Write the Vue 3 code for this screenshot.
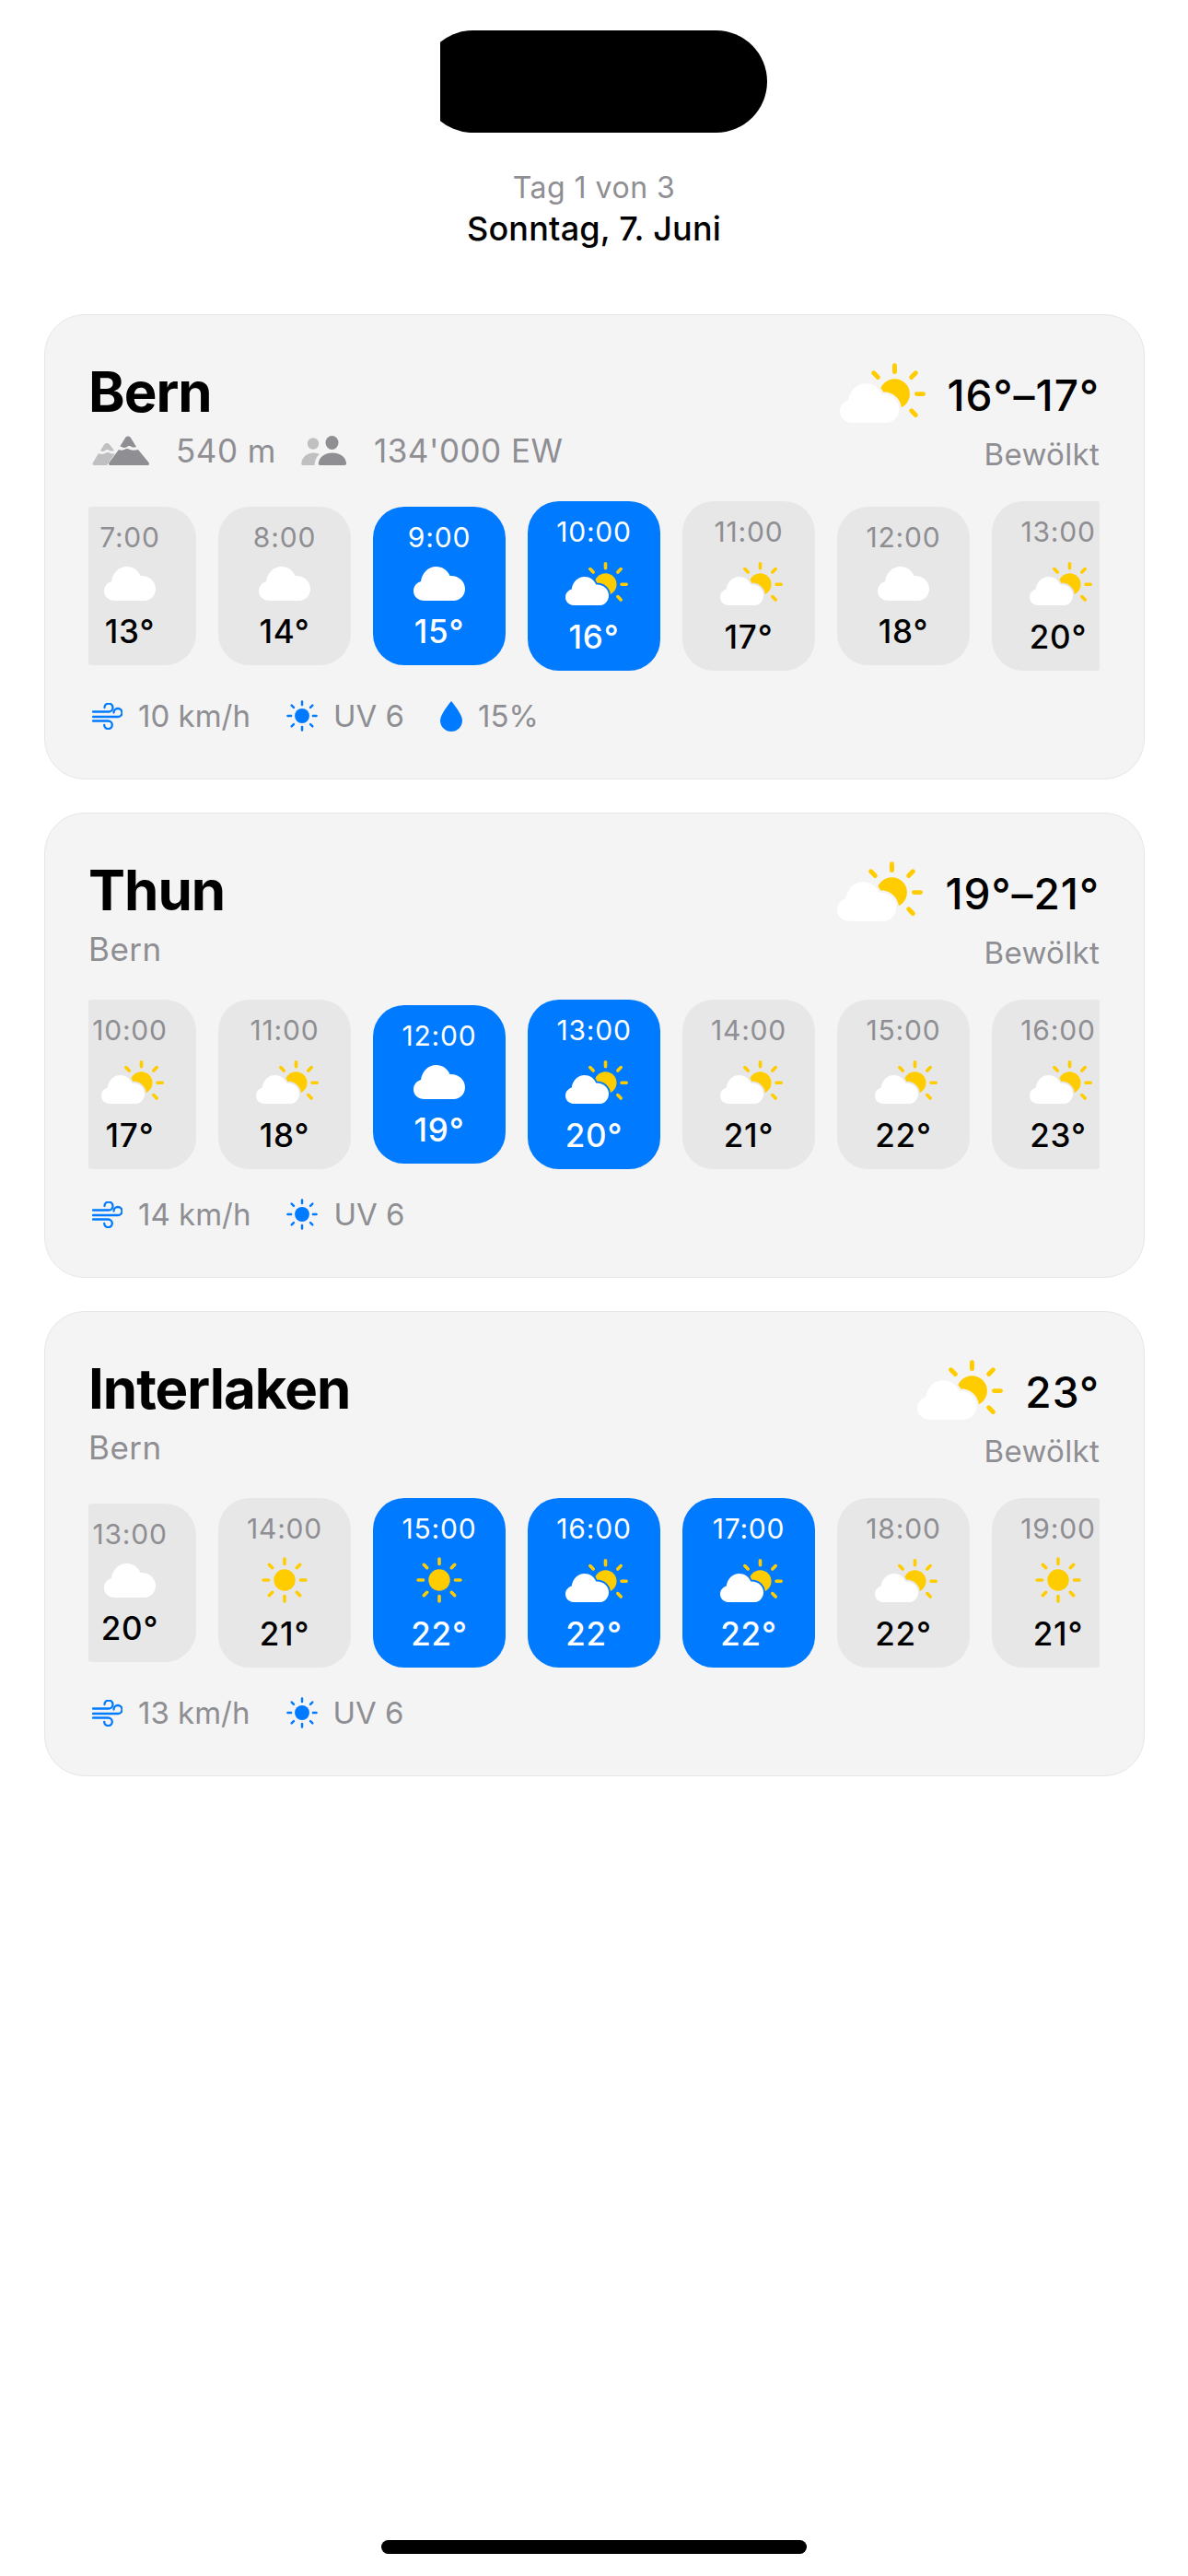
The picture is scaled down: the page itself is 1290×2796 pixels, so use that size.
<script setup>
const cities = [
  {
    name: 'Bern',
    range: '16°–17°',
    height: '540 m',
    people: "134'000 EW",
    wind: '10 km/h',
    rain: '15%',
    hours: [
      { time: '7:00', temp: 13, icon: 'cloud' },
      { time: '8:00', temp: 14, icon: 'cloud' },
      { time: '9:00', temp: 15, icon: 'cloud', active: true },
      { time: '10:00', temp: 16, icon: 'mixed', active: true },
      { time: '11:00', temp: 17, icon: 'mixed' },
      { time: '12:00', temp: 18, icon: 'cloud' },
      { time: '13:00', temp: 20, icon: 'mixed' },
    ],
  },
  {
    name: 'Thun',
    canton: 'Bern',
    range: '19°–21°',
    wind: '14 km/h',
    hours: [
      { time: '10:00', temp: 17, icon: 'mixed' },
      { time: '11:00', temp: 18, icon: 'mixed' },
      { time: '12:00', temp: 19, icon: 'cloud', active: true },
      { time: '13:00', temp: 20, icon: 'mixed', active: true },
      { time: '14:00', temp: 21, icon: 'mixed' },
      { time: '15:00', temp: 22, icon: 'mixed' },
      { time: '16:00', temp: 23, icon: 'mixed' },
    ],
  },
  {
    name: 'Interlaken',
    canton: 'Bern',
    range: '23°',
    wind: '13 km/h',
    hours: [
      { time: '13:00', temp: 20, icon: 'cloud' },
      { time: '14:00', temp: 21, icon: 'sun' },
      { time: '15:00', temp: 22, icon: 'sun', active: true },
      { time: '16:00', temp: 22, icon: 'mixed', active: true },
      { time: '17:00', temp: 22, icon: 'mixed', active: true },
      { time: '18:00', temp: 22, icon: 'mixed' },
      { time: '19:00', temp: 21, icon: 'sun' },
    ],
  },
]
</script>

<template>
  <div class="page">
    <svg class="sprites" aria-hidden="true">
      <defs>
        <path id="cloud-shape" d="M12 37C5 37 0 32.5 0 26.5C0 21 3.5 17.5 8 16C9.5 6.5 16 0 24.5 0C31.5 0 37 4 39.5 10C49 9.5 56 16 56 24C56 31.5 50.5 37 43.5 37Z" />
        <symbol id="i-cloud" viewBox="0 0 56 37">
          <use href="#cloud-shape" fill="#fff" />
        </symbol>
        <symbol id="i-sun" viewBox="-25 -25 50 50">
          <circle r="11.7" fill="currentColor" />
          <g stroke="currentColor" stroke-width="3.6" stroke-linecap="round">
            <path d="M0 -17.5V-22.9M0 17.5V22.9M-17.5 0H-22.9M17.5 0H22.9" />
            <path d="M13.3 -13.3L16.7 -16.7M-13.3 -13.3L-16.7 -16.7M13.3 13.3L16.7 16.7M-13.3 13.3L-16.7 16.7" />
          </g>
        </symbol>
        <symbol id="i-mixed" viewBox="0 0 68 47">
          <g transform="translate(43.5 24.3)">
            <circle r="12" fill="#ffcc00" />
            <g stroke="#ffcc00" stroke-width="3.6" stroke-linecap="round">
              <path d="M0 -17.5V-22.5M17.5 0H22.7" />
              <path d="M13.3 -13.3L16.7 -16.7M-13.3 -13.3L-16.7 -16.7M13.3 13.3L16.7 16.7" />
            </g>
          </g>
          <g transform="translate(0 16) scale(.84)">
            <use href="#cloud-shape" fill="#fff" stroke="currentColor" stroke-width="4.4" paint-order="stroke" />
          </g>
        </symbol>
      </defs>
    </svg>

    <header class="top">
      <div class="redacted"><div class="redacted-fill"></div></div>
      <div class="day-count">Tag 1 von 3</div>
      <div class="day-name">Sonntag, 7. Juni</div>
    </header>

    <main class="cards">
      <section v-for="city in cities" :key="city.name" class="card">
        <div class="head">
          <div class="head-left">
            <h2 class="name">{{ city.name }}</h2>
            <div class="sub">
              <template v-if="city.height">
                <svg class="ic-mountain" viewBox="0 0 62 32">
                  <g fill="#c0c0c2">
                    <path d="M13.5 9Q16 7 18.5 9L24 16Q21 17 19 16Q16 14 14 16Q12 18 9 16Z" />
                    <path d="M7 19Q11 21 14 19Q17 17 20 19Q22 20 25 19L16 32H2.5Q-.5 32 1 29Z" />
                  </g>
                  <g fill="#8e8e93">
                    <path d="M36.5 1.500Q39 -.5 41.500 1.500L48 12Q45 13 43 12Q40 10 38 12Q35 14 32 12Q30 11 30 12Z" />
                    <path d="M29 15Q32 16.500 35 15Q38 13 41 15Q45 16.500 50 15L61.500 29Q63 32 60 32H20Q17 32 18.500 29Z" />
                  </g>
                </svg>
                <span class="sub-height">{{ city.height }}</span>
                <svg class="ic-people" viewBox="0 0 49 32">
                  <circle cx="13" cy="8.500" r="6.200" fill="#c0c0c2" />
                  <path fill="#c0c0c2" d="M2 32Q0 32 .2 30C1 23 6 19 13 18.500C15.500 18.500 18 19 20 20C17 22.500 15 26 14.500 32Z" />
                  <ellipse cx="33.500" cy="7.500" rx="7" ry="7.500" fill="#8e8e93" />
                  <path fill="#8e8e93" d="M20.500 32Q18.500 32 18.800 29.500C20 22.500 26 18.500 34 18.500C42 18.500 48 22.500 49 29.500C49.200 32 47.500 32 46 32Z" />
                </svg>
                <span>{{ city.people }}</span>
              </template>
              <span v-else>{{ city.canton }}</span>
            </div>
          </div>
          <div class="head-right">
            <div class="summary">
              <svg class="ic-summary"><use href="#i-mixed" /></svg>
              <span class="range">{{ city.range }}</span>
            </div>
            <div class="condition">Bewölkt</div>
          </div>
        </div>

        <div class="hours">
          <div class="track">
            <div
              v-for="hour in city.hours"
              :key="hour.time"
              class="hour"
              :class="{ active: hour.active }"
            >
              <span class="time">{{ hour.time }}</span>
              <div class="hour-icon" :class="{ short: hour.icon === 'cloud' }">
                <svg v-if="hour.icon === 'cloud'" class="ic-cloud"><use href="#i-cloud" /></svg>
                <svg v-else-if="hour.icon === 'sun'" class="ic-sun"><use href="#i-sun" /></svg>
                <svg v-else class="ic-mixed"><use href="#i-mixed" /></svg>
              </div>
              <span class="temp">{{ hour.temp }}°</span>
            </div>
          </div>
        </div>

        <div class="facts">
          <div class="fact">
            <svg class="ic-wind" viewBox="0 0 33 29" fill="none" stroke="#007aff" stroke-width="2.300" stroke-linecap="round">
              <path d="M1 9.500H18A4.500 4.500 0 1 0 13.500 5" />
              <path d="M1 15H28A4.500 4.500 0 1 0 23.500 10.500" />
              <path d="M1 19.500H17.500A4.300 4.300 0 1 1 13.200 23.800" />
            </svg>
            <span>{{ city.wind }}</span>
          </div>
          <div class="fact">
            <svg class="ic-uv"><use href="#i-sun" /></svg>
            <span>UV 6</span>
          </div>
          <div v-if="city.rain" class="fact">
            <svg class="ic-drop" viewBox="0 0 24 33">
              <path fill="#007aff" d="M12 0C12 0 24 14 24 21A12 12 0 0 1 0 21C0 14 12 0 12 0Z" />
            </svg>
            <span>{{ city.rain }}</span>
          </div>
        </div>
      </section>
    </main>

    <div class="home-bar"></div>
  </div>
</template>

<style scoped>
.page {
  position: relative;
  width: 1290px;
  height: 2796px;
  padding-top: 33px;
  box-sizing: border-box;
  background: #fff;
  color: #000;
  font-family: Inter, "Noto Sans", sans-serif;
  overflow: hidden;
}
.sprites { position: absolute; width: 0; height: 0; }

.top { display: flex; flex-direction: column; align-items: center; }
.redacted {
  align-self: flex-start;
  margin-left: 478px;
  width: 355px;
  height: 111px;
  overflow: hidden;
}
.redacted-fill {
  width: 375px;
  height: 111px;
  margin-left: -20px;
  border-radius: 55.5px;
  background: #000;
}
.day-count {
  margin-top: 38px;
  font-size: 32px;
  line-height: 44px;
  letter-spacing: .5px;
  color: #8e8e93;
}
.day-name {
  font-size: 36px;
  line-height: 44px;
  letter-spacing: .2px;
  font-weight: 500;
}

.cards {
  display: flex;
  flex-direction: column;
  gap: 36px;
  margin: 71px 47px 0 48px;
}
.card {
  height: 505px;
  box-sizing: border-box;
  padding: 47px 48px 0 47px;
  border: 1px solid #e6e6e6;
  border-radius: 44px;
  background: #f4f4f4;
}

.head { display: flex; justify-content: space-between; align-items: flex-start; }
.name {
  margin: 0;
  font-size: 60px;
  line-height: 72px;
  font-weight: 700;
  letter-spacing: -1px;
}
.sub {
  display: flex;
  align-items: center;
  margin-top: 6px;
  font-size: 35px;
  line-height: 44px;
  letter-spacing: .5px;
  color: #8e8e93;
}
.ic-mountain { width: 62px; height: 32px; margin: 0 29px 0 4px; }
.sub-height { margin-right: 27px; }
.ic-people { width: 49px; height: 32px; margin-right: 30px; }

.head-right { display: flex; flex-direction: column; align-items: flex-end; }
.summary { display: flex; align-items: center; gap: 24px; margin-top: 5px; }
.ic-summary { width: 93px; height: 65px; color: #f4f4f4; }
.range {
  padding-top: 5px;
  font-size: 46px;
  line-height: 54px;
  letter-spacing: 1px;
  font-weight: 500;
}
.condition {
  margin-top: 12px;
  font-size: 33px;
  line-height: 44px;
  letter-spacing: .3px;
  color: #8e8e93;
}

.hours { margin-top: 29px; overflow: hidden; }
.track {
  display: flex;
  align-items: center;
  gap: 24px;
  width: max-content;
  height: 184px;
  margin-left: -27px;
}
.hour {
  display: flex;
  flex-direction: column;
  align-items: center;
  width: 144px;
  box-sizing: border-box;
  padding: 15px 0 16px;
  border-radius: 34px;
  background: #e7e7e7;
  color: #000;
}
.hour.active { background: #007aff; color: #fff; }
.time {
  font-size: 30px;
  line-height: 36px;
  letter-spacing: .8px;
  color: #8e8e93;
}
.hour.active .time { color: #fff; }
.hour-icon {
  display: flex;
  align-items: center;
  justify-content: center;
  height: 50px;
  margin-top: 13px;
}
.hour-icon.short { height: 38px; }
.temp {
  margin-top: 12px;
  font-size: 35px;
  line-height: 42px;
  letter-spacing: .8px;
  font-weight: 450;
}
.ic-cloud { width: 56px; height: 37px; }
.ic-sun { width: 50px; height: 50px; color: #ffcc00; }
.ic-mixed { width: 68px; height: 47px; color: #e7e7e7; margin-left: 5px; }
.hour.active .ic-mixed { color: #007aff; }

.facts { display: flex; gap: 39px; margin-top: 27px; }
.fact {
  display: flex;
  align-items: center;
  gap: 17px;
  font-size: 33px;
  line-height: 44px;
  color: #8e8e93;
}
.ic-wind { width: 33px; height: 29px; margin-left: 4px; }
.ic-uv { width: 34px; height: 34px; color: #007aff; }
.ic-drop { width: 24px; height: 33px; }

.home-bar {
  position: absolute;
  left: 414px;
  top: 2757px;
  width: 462px;
  height: 15px;
  border-radius: 7.5px;
  background: #000;
}
</style>

<style>
html, body { margin: 0; background: #fff; }
</style>
